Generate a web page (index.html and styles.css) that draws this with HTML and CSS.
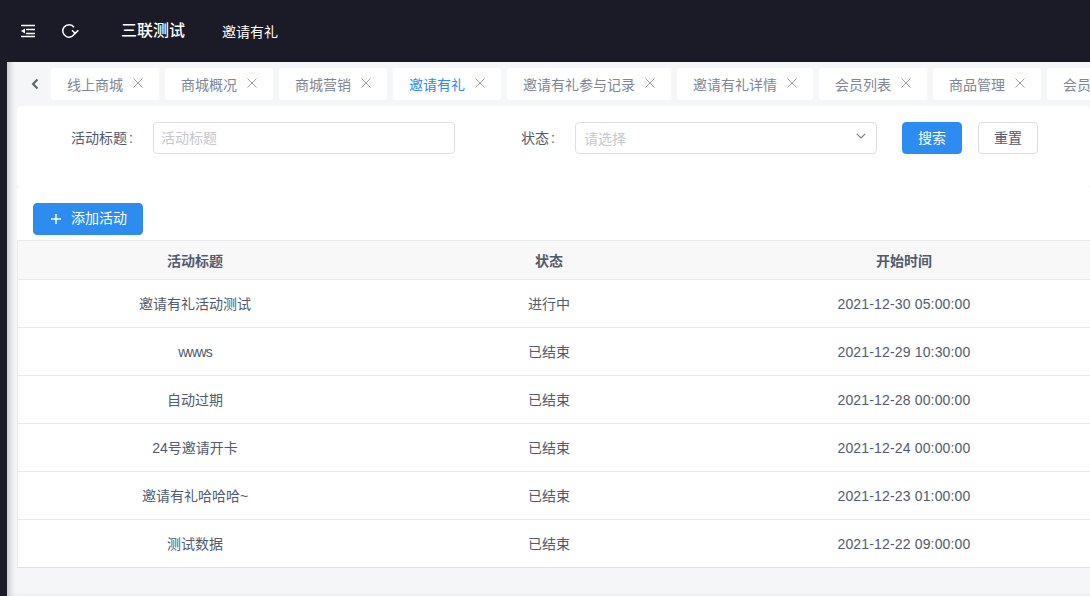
FILE: index.html
```html
<!DOCTYPE html>
<html lang="zh-CN">
<head>
<meta charset="utf-8">
<title>邀请有礼</title>
<link rel="stylesheet" href="styles.css">
</head>
<body>
<div class="app">
  <aside class="rail"></aside>
  <main class="main">
    <header class="topbar">
      <svg class="top-icon" width="16" height="16" viewBox="0 0 16 16"><path d="M1 2.500h14M6 6.500h9M6 10.500h9M1 13.500h14" stroke="#fff" stroke-width="1.400" fill="none"/><path d="M5 5.500v5L1 8z" fill="#fff"/></svg>
      <svg class="top-icon refresh" width="17" height="16" viewBox="0 0 17 16"><path d="M13.120 9A6.200 6.200 0 1 1 12 4.300" stroke="#fff" stroke-width="1.500" fill="none"/><path d="M10 7.200l3.200 3.200 3.200-3.200" stroke="#fff" stroke-width="1.500" fill="none"/></svg>
      <span class="brand">三联测试</span>
      <span class="crumb">邀请有礼</span>
    </header>
    <nav class="tabs">
      <svg class="tab-back" width="10" height="12" viewBox="0 0 10 12"><path d="M7.500 1.500 3 6l4.500 4.500" stroke="#5a6270" stroke-width="2" fill="none"/></svg>
      <a class="tab">线上商城<span class="tab-x"><svg width="10" height="10" viewBox="0 0 10 10"><path d="M.5.5l9 9M9.500.5l-9 9" stroke="currentColor" fill="none"/></svg></span></a>
      <a class="tab">商城概况<span class="tab-x"><svg width="10" height="10" viewBox="0 0 10 10"><path d="M.5.5l9 9M9.500.5l-9 9" stroke="currentColor" fill="none"/></svg></span></a>
      <a class="tab">商城营销<span class="tab-x"><svg width="10" height="10" viewBox="0 0 10 10"><path d="M.5.5l9 9M9.500.5l-9 9" stroke="currentColor" fill="none"/></svg></span></a>
      <a class="tab is-active">邀请有礼<span class="tab-x"><svg width="10" height="10" viewBox="0 0 10 10"><path d="M.5.5l9 9M9.500.5l-9 9" stroke="currentColor" fill="none"/></svg></span></a>
      <a class="tab">邀请有礼参与记录<span class="tab-x"><svg width="10" height="10" viewBox="0 0 10 10"><path d="M.5.5l9 9M9.500.5l-9 9" stroke="currentColor" fill="none"/></svg></span></a>
      <a class="tab">邀请有礼详情<span class="tab-x"><svg width="10" height="10" viewBox="0 0 10 10"><path d="M.5.5l9 9M9.500.5l-9 9" stroke="currentColor" fill="none"/></svg></span></a>
      <a class="tab">会员列表<span class="tab-x"><svg width="10" height="10" viewBox="0 0 10 10"><path d="M.5.5l9 9M9.500.5l-9 9" stroke="currentColor" fill="none"/></svg></span></a>
      <a class="tab">商品管理<span class="tab-x"><svg width="10" height="10" viewBox="0 0 10 10"><path d="M.5.5l9 9M9.500.5l-9 9" stroke="currentColor" fill="none"/></svg></span></a>
      <a class="tab">会员管理<span class="tab-x"></span></a>
    </nav>
    <section class="card filters">
      <label class="f-label f-label-title">活动标题<span class="colon">:</span></label>
      <div class="input input-title">活动标题</div>
      <label class="f-label f-label-status">状态<span class="colon">:</span></label>
      <div class="input input-status">请选择
        <svg class="caret" width="10" height="6" viewBox="0 0 10 6"><path d="M.8.8 5 5 9.200.8" stroke="#7a808a" stroke-width="1.200" fill="none"/></svg>
      </div>
      <button class="btn btn-primary btn-search">搜索</button>
      <button class="btn btn-default">重置</button>
    </section>
    <section class="card list">
      <button class="btn btn-primary btn-add"><svg class="add-plus" width="10" height="10" viewBox="0 0 10 10"><path d="M5 0v10M0 5h10" stroke="#fff" stroke-width="1.400"/></svg>添加活动</button>
      <div class="table">
        <div class="row head"><div>活动标题</div><div>状态</div><div>开始时间</div></div>
        <div class="row"><div>邀请有礼活动测试</div><div>进行中</div><div class="date">2021-12-30 05:00:00</div></div>
        <div class="row"><div class="latin-narrow">wwws</div><div>已结束</div><div class="date">2021-12-29 10:30:00</div></div>
        <div class="row"><div>自动过期</div><div>已结束</div><div class="date">2021-12-28 00:00:00</div></div>
        <div class="row"><div>24号邀请开卡</div><div>已结束</div><div class="date">2021-12-24 00:00:00</div></div>
        <div class="row"><div>邀请有礼哈哈哈~</div><div>已结束</div><div class="date">2021-12-23 01:00:00</div></div>
        <div class="row"><div>测试数据</div><div>已结束</div><div class="date">2021-12-22 09:00:00</div></div>
      </div>
    </section>
  </main>
</div>
</body>
</html>
```
FILE: styles.css
```css
* { box-sizing: border-box; }
html, body { margin: 0; height: 100%; overflow: hidden; }
body { font-family: "Liberation Sans", "Noto Sans CJK SC", sans-serif; font-size: 14px; color: #515a6e; background: #f5f6f8; }
.app { display: flex; width: 1090px; height: 596px; overflow: hidden; }
.rail { flex: 0 0 7px; background: #1a1b27; }
.main { flex: 0 0 1083px; min-width: 0; overflow: hidden; background: #f5f6f8; box-shadow: inset 6px 0 6px -3px rgba(0, 0, 0, .2); }

.topbar { display: flex; align-items: center; height: 62px; background: #1a1b27; color: #fff; padding-left: 13px; }
.top-icon { flex: none; }
.refresh { margin-left: 26px; }
.brand { margin-left: 42px; font-size: 16px; font-weight: 500; position: relative; top: -2px; }
.crumb { margin-left: 37px; font-size: 14px; }

.tabs { display: flex; align-items: center; gap: 6px; height: 32px; margin-top: 6px; padding-left: 44px; white-space: nowrap; position: relative; }
.tab-back { position: absolute; left: 23px; top: 10px; }
.tab { flex: none; display: flex; height: 32px; align-items: center; padding: 0 16px; background: #fff; border-radius: 3px; color: #808695; font-size: 14px; }
.tab.is-active { color: #2d8cf0; }
.tab-x { display: inline-flex; width: 10px; height: 10px; margin-left: 10px; position: relative; top: -1px; color: #9a9fa8; }

.card { background: #fff; border-radius: 4px; margin-left: 10px; }
.filters { display: flex; align-items: flex-start; height: 81px; margin-top: 6px; padding-top: 16px; }
.f-label { line-height: 32px; color: #515a6e; font-size: 14px; }
.f-label-title { margin-left: 54px; width: 82px; }
.f-label-status { margin-left: 66px; width: 54px; }
.colon { margin-left: 2px; }
.input { position: relative; height: 32px; line-height: 30px; border: 1px solid #dcdee2; border-radius: 4px; padding-left: 8px; color: #c5c8ce; font-size: 14px; background: #fff; }
.input-title { width: 302px; padding-left: 7px; }
.input-status { width: 302px; line-height: 32px; }
.caret { position: absolute; right: 10px; top: 10px; }

.btn { display: inline-flex; align-items: center; justify-content: center; height: 32px; border-radius: 4px; font: inherit; font-size: 14px; padding: 0 0 2px; cursor: pointer; }
.btn-primary { background: #2d8cf0; border: 1px solid #2d8cf0; color: #fff; }
.btn-default { background: #fff; border: 1px solid #dcdee2; color: #515a6e; width: 60px; margin-left: 16px; }
.btn-search { width: 60px; margin-left: 25px; }

.list { padding-top: 16px; height: 381px; border-radius: 4px 0 0 0; }
.btn-add { width: 110px; margin-left: 16px; gap: 10px; display: flex; justify-content: flex-start; padding: 0 0 4px 17px; }
.add-plus { margin-top: 3px; }
.table { margin-top: 5px; width: 1400px; border-left: 1px solid #e8eaec; border-top: 1px solid #e8eaec; }
.row { display: grid; grid-template-columns: 354px 354px 356px 1fr; height: 48px; padding-bottom: 2px; align-items: center; text-align: center; border-bottom: 1px solid #e8eaec; font-size: 14px; }
.row:last-child { border-bottom-color: #dfe1e4; }
.row.head { height: 39px; padding-bottom: 1px; background: #f8f8f9; font-weight: 700; }
.date { letter-spacing: .16px; padding-top: 2px; }
.latin-narrow { letter-spacing: -.9px; padding-top: 2px; }
```
